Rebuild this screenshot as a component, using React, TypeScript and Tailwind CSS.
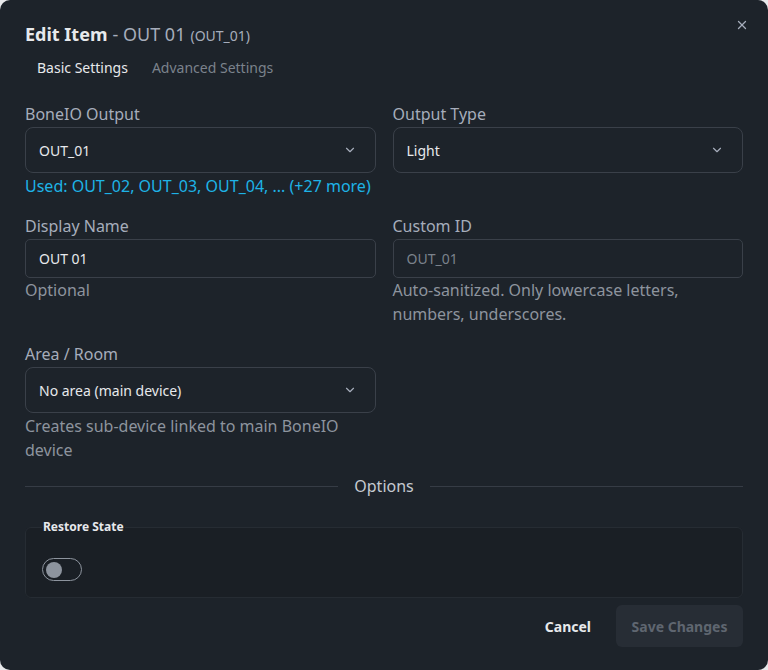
import { ChevronDown, X } from 'lucide-react';

const font = { fontFamily: '"Noto Sans", "Open Sans", sans-serif' };

function Label({ children }: { children: React.ReactNode }) {
  return <div className="text-[16px] leading-6 text-[#a6adbb] mb-px">{children}</div>;
}

function Select({ value }: { value: string }) {
  return (
    <div className="h-[46px] flex items-center justify-between rounded-lg border border-[#3a4049] pl-[13px] pr-[18px]">
      <span className="text-[14px] text-[#e7e9ec]">{value}</span>
      <ChevronDown className="w-[14px] h-[14px] text-[#a6adbb]" strokeWidth={2} />
    </div>
  );
}

function Input({ value, placeholder }: { value?: string; placeholder?: string }) {
  return (
    <div className="h-[39px] flex items-center rounded-[5px] border border-[#3a4049] px-[13px]">
      {value ? (
        <span className="text-[14px] text-[#e7e9ec]">{value}</span>
      ) : (
        <span className="text-[14px] text-[#7b828c]">{placeholder}</span>
      )}
    </div>
  );
}

function Help({ children, className = '' }: { children: React.ReactNode; className?: string }) {
  return <div className={`text-[16px] leading-6 text-[#8d949e] ${className}`}>{children}</div>;
}

export default function App() {
  return (
    <div className="w-[768px] h-[670px] bg-[#e8e9eb]" style={font}>
      <div className="relative w-full h-full rounded-[10px] bg-[#1d232a] px-[25px] pt-[21px] overflow-hidden">
        <button className="absolute right-[19px] top-[18px] text-[#a6adbb]">
          <X className="w-[14px] h-[14px]" strokeWidth={2.2} />
        </button>

        {/* Title */}
        <h2 className="h-7 flex items-baseline text-[18px]">
          <span className="font-bold text-[#e7e9ec]">Edit Item</span>
          <span className="text-[#a6adbb] ml-[5px]">- OUT 01</span>
          <span className="text-[14px] text-[#a6adbb] ml-[5px]">(OUT_01)</span>
        </h2>

        {/* Tabs */}
        <div className="flex mt-[2px] h-8 items-center text-[14px]">
          <span className="px-3 text-[#e7e9ec]">Basic Settings</span>
          <span className="px-3 text-[#7b828c]">Advanced Settings</span>
        </div>

        {/* Fields */}
        <div className="grid grid-cols-2 gap-x-[17px] mt-[19px]">
          <div>
            <Label>BoneIO Output</Label>
            <Select value="OUT_01" />
            <div className="text-[16px] leading-6 text-[#1eb3e6] mt-px">
              Used: OUT_02, OUT_03, OUT_04, ... (+27 more)
            </div>
          </div>
          <div>
            <Label>Output Type</Label>
            <Select value="Light" />
          </div>

          <div className="mt-4">
            <Label>Display Name</Label>
            <Input value="OUT 01" />
            <Help>Optional</Help>
          </div>
          <div className="mt-4">
            <Label>Custom ID</Label>
            <Input placeholder="OUT_01" />
            <Help>
              Auto-sanitized. Only lowercase letters,
              <br />
              numbers, underscores.
            </Help>
          </div>

          <div className="mt-4">
            <Label>Area / Room</Label>
            <Select value="No area (main device)" />
            <Help className="mt-px">Creates sub-device linked to main BoneIO device</Help>
          </div>
          <div />
        </div>

        {/* Divider */}
        <div className="flex items-center gap-4 mt-[12px] h-6">
          <div className="flex-1 h-px bg-[#363c45]" />
          <span className="text-[16px] text-[#c5cad1]">Options</span>
          <div className="flex-1 h-px bg-[#363c45]" />
        </div>

        {/* Restore State */}
        <fieldset className="mt-[20px] h-[80px] rounded-md border border-[#262c33] bg-[#1a1f25] px-4 pt-[4px]">
          <legend className="text-[12px] font-bold text-[#e7e9ec] px-px">Restore State</legend>
          <div className="mt-[18px] w-10 h-[23px] rounded-full border border-[#8d949e] flex items-center px-[3px]">
            <div className="w-[16px] h-[16px] rounded-full bg-[#8d949e]" />
          </div>
        </fieldset>

        {/* Actions */}
        <div className="flex justify-end items-center gap-[25px] mt-[7px]">
          <button className="text-[14px] font-bold text-[#e7e9ec] whitespace-nowrap">Cancel</button>
          <button className="h-[42px] w-[127px] rounded-md bg-[#272d35] text-[14px] font-bold text-[#5f6670] whitespace-nowrap">
            Save Changes
          </button>
        </div>
      </div>
    </div>
  );
}
